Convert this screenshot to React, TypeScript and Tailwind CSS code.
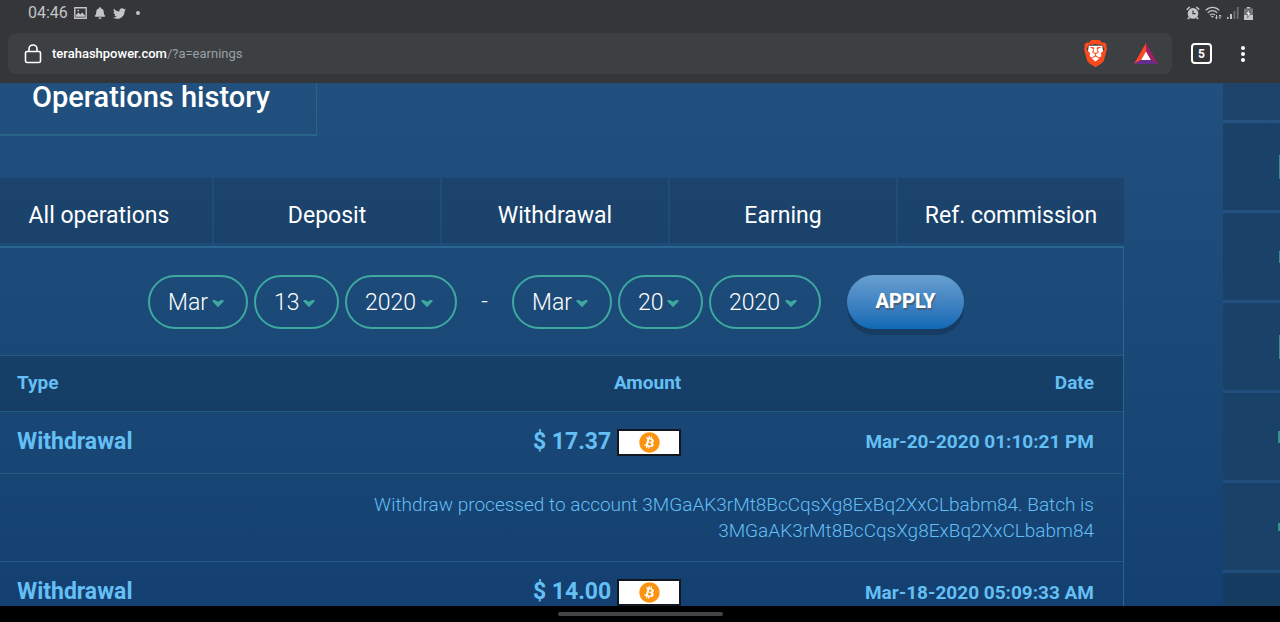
import React from 'react';
import { FaBell, FaBitcoin, FaTwitter } from 'react-icons/fa';
import { SiBrave } from 'react-icons/si';

const tabs = ['All operations', 'Deposit', 'Withdrawal', 'Earning', 'Ref. commission'];

const operations = [
  {
    type: 'Withdrawal',
    amount: '$ 17.37',
    date: 'Mar-20-2020 01:10:21 PM',
    details: 'Withdraw processed to account 3MGaAK3rMt8BcCqsXg8ExBq2XxCLbabm84. Batch is 3MGaAK3rMt8BcCqsXg8ExBq2XxCLbabm84',
  },
  {
    type: 'Withdrawal',
    amount: '$ 14.00',
    date: 'Mar-18-2020 05:09:33 AM',
    details: '',
  },
];

const menuMarks = ['h-6 w-px', 'h-3 w-px', 'h-6 w-px', 'h-3 w-0.5', 'h-2 w-0.5'];

const StatusBar = () => (
  <div className="flex h-[33px] items-center justify-between pl-7 pr-[27px] pb-[7px] text-[#c4c5c7]">
    <div className="flex items-center">
      <span className="w-10 text-base">04:46</span>
      <svg viewBox="0 0 13 12" className="ml-1.5 h-3 w-[13px]">
        <path fill="none" stroke="currentColor" strokeWidth="1.4" d="M.8.8h11.4v10.4H.8z" />
        <path fill="currentColor" d="M2 9.8V8l2.4-2.6 2 2 1.7-1.8L11 8.6v1.2z" />
        <circle cx="4.2" cy="3.6" r=".9" fill="currentColor" />
      </svg>
      <FaBell className="ml-[7px] h-3 w-3" />
      <FaTwitter className="ml-[7px] h-[13px] w-[13px]" />
      <span className="ml-2.5 h-1 w-1 rounded-full bg-[#c4c5c7]" />
    </div>
    <div className="flex items-center gap-[5px]">
      <svg viewBox="0 0 14 14" className="h-[14px] w-[14px]">
        <circle cx="7" cy="7.4" r="5.3" fill="currentColor" />
        <path stroke="currentColor" strokeWidth="1.6" d="M.8 3.6 3.8 1M13.2 3.6 10.2 1M3.4 11.4 1.8 13M10.6 11.4l1.6 1.6" />
        <path fill="none" stroke="#35363a" strokeWidth="1.2" d="M7 4.4v3.2h2.6" />
      </svg>
      <svg viewBox="0 0 17 14" className="h-[14px] w-[17px]" fill="none" stroke="currentColor" strokeWidth="1.2">
        <path d="M.7 4.4C4.6.3 10.4.3 14.3 4.4M2.7 6.8C5.500 4 9.500 4 12.300 6.800M4.800 9.100c1.500-1.500 3.900-1.500 5.400 0" />
        <path fill="currentColor" stroke="none" d="m5.800 10.200 1.500 1.600 1.500-1.600c-.8-.7-2.200-.7-3 0z" />
        <path d="M11.500 9v3.800M10.200 11.500l1.300 1.300 1.300-1.300M15 13V9M13.700 10.300 15 9l1.300 1.300" strokeWidth="1" />
      </svg>
      <svg viewBox="0 0 12 12" className="h-3 w-3" fill="currentColor">
        <path d="M0 10h1.500v2H0zM3 7h2v5H3z" />
        <path opacity=".4" d="M6.500 4h1.800v8H6.500zM9.800 0h1.800v12H9.800z" />
      </svg>
      <svg viewBox="0 0 9 13" className="h-[13px] w-[9px]">
        <path fill="currentColor" opacity=".45" d="M0 1.500h9V8H0z" />
        <path fill="currentColor" d="M2.800 0h3.400v1.500H2.800zM0 8h9v5H0z" />
        <path fill="#fff" stroke="#35363a" strokeWidth=".5" d="M5.400 2 1.800 7.200h2.200L3.400 11l3.800-5.200H4.900z" />
      </svg>
    </div>
  </div>
);

const AddressBar = () => (
  <div className="flex items-center pb-[9px] pl-2 pr-[35px]">
    <div className="flex h-[41px] flex-1 items-center rounded-lg bg-[#3c4043] pl-4 pr-3.5">
      <svg viewBox="0 0 18 20" className="h-5 w-[18px]" fill="none" stroke="#fff" strokeWidth="1.6">
        <rect x="1.500" y="7.500" width="15" height="11" rx="1.500" />
        <path d="M5 7.500V5a4 4 0 0 1 8 0v2.500" />
      </svg>
      <a href="#earnings" className="ml-[10px] pt-px text-[13px] text-[#9aa0a6]">
        <span className="font-medium text-white">terahashpower.com</span>/?a=earnings
      </a>
      <button aria-label="Shields" className="ml-auto grid place-items-center">
        <svg viewBox="0 0 24 28" className="col-start-1 row-start-1 h-[27px] w-[23px]">
          <path fill="#fff" d="M5 6h14l1 7-4 8-4 3-4-3-4-8z" />
        </svg>
        <SiBrave className="col-start-1 row-start-1 h-[27px] w-[27px] text-[#fb4a1e]" />
      </button>
      <button aria-label="Rewards" className="ml-[25px]">
        <svg viewBox="0 0 24 22" className="h-[22px] w-6">
          <path fill="#ff4724" d="M12 0 0 21l7.500-4.200L12 9z" />
          <path fill="#9e1f63" d="M12 0v9l4.500 7.800L24 21z" />
          <path fill="#662d91" d="m0 21 7.500-4.200h9L24 21z" />
          <path fill="#fff" d="m12 8.600 4.800 8.400H7.200z" />
        </svg>
      </button>
    </div>
    <button
      aria-label="Tabs"
      className="ml-[19px] flex h-[21px] w-[21px] items-center justify-center rounded-[4px] border-2 border-white text-xs font-bold text-white"
    >
      5
    </button>
    <button aria-label="Menu" className="ml-[29px] flex flex-col gap-0.5">
      <span className="h-1 w-1 rounded-full bg-white" />
      <span className="h-1 w-1 rounded-full bg-white" />
      <span className="h-1 w-1 rounded-full bg-white" />
    </button>
  </div>
);

const DateSelect = ({ label, value, width }: { label: string; value: string; width: string }) => (
  <span className={`relative ${width}`}>
    <select
      aria-label={label}
      defaultValue={value}
      className="h-[54px] w-full appearance-none rounded-full border-2 border-[#3da99f] bg-transparent pt-0.5 pl-[18px] text-[23px] font-light text-white"
    >
      <option>{value}</option>
    </select>
    <svg viewBox="0 0 12 8" className="pointer-events-none absolute right-6 top-[25px] h-2 w-3">
      <path fill="#3da99f" d="M.5 0h2.200L6 1.700 9.300 0h2.200v1.600L6 7.200.5 1.600z" />
    </svg>
  </span>
);

const Filters = () => (
  <form className="flex items-center gap-1.5 pt-[27px] pb-[26px] pl-[148px]">
    <DateSelect label="From month" value="Mar" width="w-[100px]" />
    <DateSelect label="From day" value="13" width="w-[85px]" />
    <DateSelect label="From year" value="2020" width="w-[112px]" />
    <span className="w-[43px] text-center text-[23px] font-light text-white">-</span>
    <DateSelect label="To month" value="Mar" width="w-[100px]" />
    <DateSelect label="To day" value="20" width="w-[85px]" />
    <DateSelect label="To year" value="2020" width="w-[112px]" />
    <button
      type="button"
      className="ml-5 h-[54px] w-[117px] rounded-full bg-linear-to-b from-[#689fd0] to-[#0d69b4] pb-0.5 text-xl font-extrabold text-white shadow-[0_6px_0_#173c63] text-shadow-[1px_2px_1px_#44607a]"
    >
      APPLY
    </button>
  </form>
);

const OperationsTable = () => (
  <table className="w-full table-fixed text-[#64bff4]">
    <colgroup>
      <col className="w-[38%]" />
      <col className="w-[24%]" />
      <col />
    </colgroup>
    <thead>
      <tr className="h-14 border-t border-[#225a80] bg-black/12 text-[19px] font-bold">
        <th className="pl-[17px] text-left">Type</th>
        <th className="pr-[15px] text-right">Amount</th>
        <th className="pr-[29px] text-right">Date</th>
      </tr>
    </thead>
    <tbody>
      {operations.map((op) => (
        <React.Fragment key={op.date}>
          <tr className="h-[62px] border-t border-[#225a80] font-bold">
            <td className="pb-px pl-[17px] text-[23px]">{op.type}</td>
            <td className="pb-px pr-[15px]">
              <div className="flex items-center justify-end gap-1.5 text-[23px]">
                {op.amount}
                <span className="flex h-[27px] w-16 items-center justify-center border-2 border-[#111820] bg-white">
                  <FaBitcoin className="h-[21px] w-[21px] text-[#fb9311]" />
                </span>
              </div>
            </td>
            <td className="pr-[29px] text-right text-[19px]">{op.date}</td>
          </tr>
          {op.details && (
            <tr className="h-[88px] border-t border-[#225a80]">
              <td colSpan={3} className="pl-[340px] pr-[29px] text-right text-[19px] leading-[26px] font-light">
                {op.details}
              </td>
            </tr>
          )}
        </React.Fragment>
      ))}
    </tbody>
  </table>
);

const SideMenu = () => (
  <aside className="flex w-[57px] shrink-0 flex-col gap-[3px] bg-[#265686]/60">
    <div className="h-[37px] shrink-0 bg-[#1e446b]" />
    {menuMarks.map((mark, i) => (
      <div key={i} className="flex h-[87px] shrink-0 items-center justify-end bg-[#1a4167]">
        <span className={`${mark} bg-[#35938f]`} />
      </div>
    ))}
    <div className="flex-1 bg-[#173c61]" />
  </aside>
);

export default function App() {
  return (
    <div className="flex h-screen flex-col bg-black font-[Roboto,sans-serif]">
      <header className="shrink-0 bg-[#35363a]">
        <StatusBar />
        <AddressBar />
      </header>
      <main className="flex min-h-0 flex-1 overflow-hidden bg-linear-to-b from-[#22507e] via-[#1b4977] to-[#134070]">
        <section className="mr-[99px] min-w-0 flex-1">
          <h1 className="h-[53px] w-[317px] border-r border-b-2 border-[#286488] pl-8 text-[29px] leading-7 font-medium text-white">
            Operations history
          </h1>
          <nav className="mt-[42px] -ml-[14px] grid grid-cols-5 gap-0.5">
            {tabs.map((tab) => (
              <a key={tab} href="#operations" className="flex h-[65px] items-center justify-center bg-black/12 pt-[11px] text-[23px] text-white">
                {tab}
              </a>
            ))}
          </nav>
          <div className="mt-[3px] border-t-2 border-r border-[#2a678f]">
            <Filters />
            <OperationsTable />
          </div>
        </section>
        <SideMenu />
      </main>
      <footer className="flex h-4 shrink-0 items-center justify-center bg-black">
        <span className="h-1 w-[165px] rounded-full bg-[#454545]" />
      </footer>
    </div>
  );
}
